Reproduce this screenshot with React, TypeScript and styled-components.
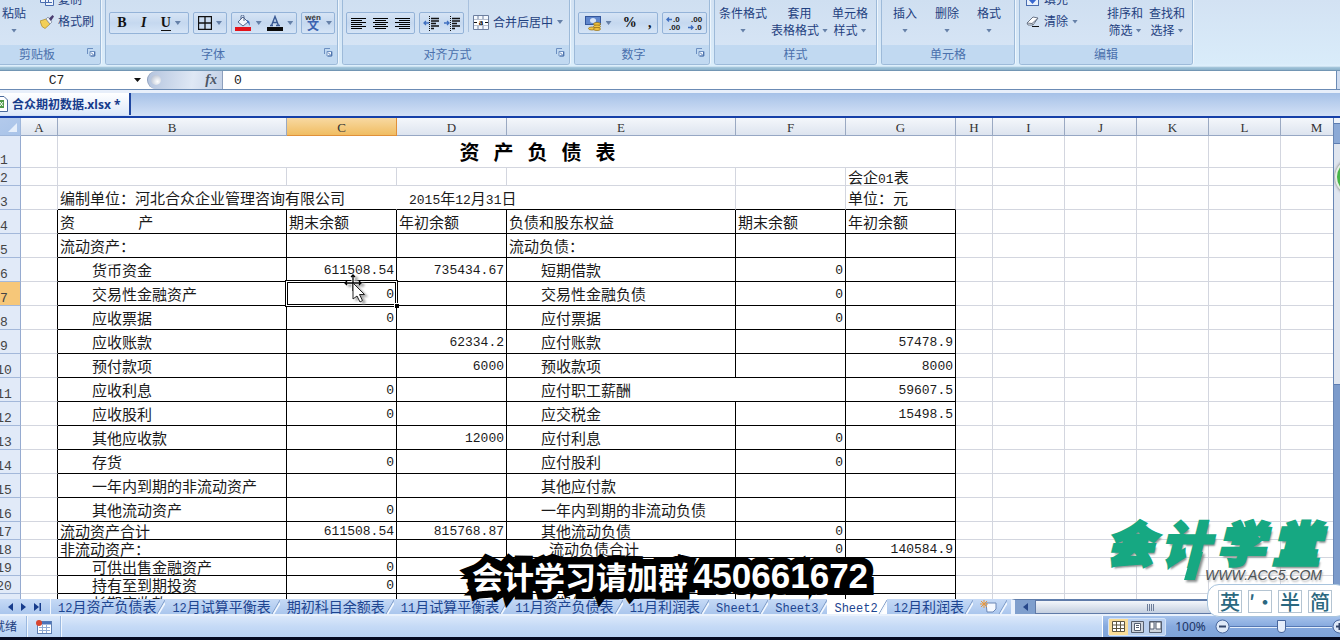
import React from "react";
import styled, { createGlobalStyle, css } from "styled-components";

const UI = `"Noto Sans", "Noto Sans CJK SC", sans-serif`;
const CELL = `"Noto Sans CJK SC", sans-serif`;
const MONO = `"Liberation Mono", "Noto Sans CJK SC", monospace`;

const Global = createGlobalStyle`
  *, *::before, *::after { box-sizing: border-box; }
  html, body { margin: 0; height: 100%; overflow: hidden; }
  button { border: 0; padding: 0; margin: 0; background: none; color: inherit; font: inherit; }
  input { font: inherit; }
`;

const Window = styled.div`
  position: relative;
  display: flex;
  flex-direction: column;
  height: 100vh;
  overflow: hidden;
  background: #fff;
  font: 12px/17px ${UI};
  color: #1f4080;
`;

/* ---------- ribbon ---------- */
const Ribbon = styled.div`
  display: flex;
  flex: none;
  gap: 4px;
  height: 71px;
  margin-left: -10px;
  padding-bottom: 6px;
  background: linear-gradient(#d3e2f3 0, #d9ecfa 64px, #dff0fc 66px, #8fb6cf 68px, #9dc3d8 69px, #6487a8 71px);
`;
const Group = styled.section<{ $w: number }>`
  display: flex;
  flex-direction: column;
  flex: none;
  width: ${(p) => p.$w}px;
  border: 1px solid #9dbad9;
  border-top: 0;
  border-radius: 0 0 3px 3px;
  background: linear-gradient(#cfdff1, #d8e6f6);
  box-shadow: 1px 0 0 #eef6fd;
  overflow: hidden;
`;
const GroupBody = styled.div<{ $gap?: number; $pad?: string }>`
  display: flex;
  align-items: flex-start;
  height: 45px;
  gap: ${(p) => p.$gap ?? 4}px;
  padding: ${(p) => p.$pad ?? "12px 3px 0"};
`;
const GroupLabel = styled.div<{ $launch?: boolean }>`
  display: flex;
  align-items: center;
  justify-content: center;
  height: 19px;
  padding: 0 ${(p) => (p.$launch ? 17 : 0)}px 0 0;
  background: #c1d9f1;
  color: #4a70ac;
  position: relative;
`;
const Launcher = styled.button`
  position: absolute;
  right: 4px;
  top: 3px;
  width: 9px;
  height: 9px;
  display: flex;
`;
const BtnSet = styled.div<{ $w: number }>`
  display: flex;
  align-items: center;
  justify-content: space-around;
  flex: none;
  width: ${(p) => p.$w}px;
  height: 22px;
  border: 1px solid #94b3d8;
  border-radius: 2px;
  background: linear-gradient(#d6e4f5, #c5d8ef 50%, #d5e4f6);
`;
const IconBtn = styled.button`
  display: flex;
  align-items: center;
  justify-content: center;
  height: 20px;
  gap: 4px;
`;
const Glyph = styled.span<{ $i?: boolean; $u?: boolean }>`
  font: ${(p) => (p.$i ? "italic" : "normal")} bold 14px/14px "Liberation Serif", serif;
  color: #111;
  ${(p) => p.$u && "border-bottom: 1px solid #111;"}
`;
const Caret = styled.span`
  flex: none;
  width: 6px;
  height: 4px;
  background: #6580a8;
  clip-path: polygon(0 0, 100% 0, 50% 100%);
`;
const TallBtn = styled.button<{ $w?: number }>`
  display: flex;
  flex-direction: column;
  align-items: center;
  flex: none;
  width: ${(p) => (p.$w ? p.$w + "px" : "auto")};
  white-space: nowrap;
  line-height: 17px;
`;
const Line = styled.span`
  display: flex;
  align-items: center;
  justify-content: center;
  gap: 3px;
  height: 17px;
`;
const Stack = styled.div`
  display: flex;
  flex-direction: column;
  flex: none;
  gap: 5px;
  margin-top: -14px;
`;
const RowBtn = styled.button`
  display: flex;
  align-items: center;
  gap: 4px;
  height: 17px;
  white-space: nowrap;
`;
const Divider = styled.span`
  width: 1px;
  height: 32px;
  margin-top: -12px;
  background: #a9c1de;
`;

/* ---------- formula bar ---------- */
const FormulaBar = styled.div`
  display: flex;
  flex: none;
  height: 19px;
  border-bottom: 1px solid #6b8bb5;
  background: #fff;
  color: #111;
`;
const NameInput = styled.input`
  width: 113px;
  border: 0;
  padding: 2px 0 0;
  text-align: center;
  background: none;
  font: 13px/16px ${MONO};
  color: #222;
  outline: 0;
`;
const NameArrow = styled.button`
  display: flex;
  align-items: center;
  justify-content: flex-end;
  width: 28px;
  margin-right: 6px;
`;
const FxPill = styled.div`
  display: flex;
  align-items: center;
  justify-content: space-between;
  width: 76px;
  padding: 0 5px 0 3px;
  border: 1px solid #8d9fbd;
  border-width: 0 1px;
  border-radius: 10px 0 0 10px;
  background: linear-gradient(100deg, #b4c4de, #dfe8f5 60%, #c4d1e6);
`;
const Knob = styled.span`
  width: 10px;
  height: 10px;
  border-radius: 50%;
  background: radial-gradient(circle at 65% 65%, #fff, #a8b4c8);
`;
const Fx = styled.button`
  font: italic bold 14px/16px "Liberation Serif", serif;
  color: #4c5666;
`;
const FormulaInput = styled.input`
  flex: 1;
  min-width: 0;
  border: 0;
  padding: 2px 0 0 11px;
  font: 13px/16px ${MONO};
  color: #222;
  outline: 0;
`;
const Expand = styled.button`
  width: 4px;
  border-left: 1px solid #6b8bb5;
  background: #cfdcf0;
`;

/* ---------- workbook tab ---------- */
const BookBar = styled.div`
  display: flex;
  align-items: flex-end;
  flex: none;
  height: 28px;
  border-top: 3px solid #e8effa;
  border-bottom: 2px solid #1640a8;
  background: linear-gradient(#a6c1e7, #d3e1f6);
`;
const BookTab = styled.button`
  display: flex;
  align-items: center;
  gap: 4px;
  width: 131px;
  height: 22px;
  margin-bottom: 1px;
  border-right: 2px solid #1f46a0;
  background: linear-gradient(#fff, #dde9fa);
  color: #173c8c;
  font-weight: bold;
  white-space: nowrap;
`;

/* ---------- sheet ---------- */
const SheetArea = styled.div`
  display: flex;
  flex: 1;
  min-height: 0;
  overflow: hidden;
`;
const Viewport = styled.div`
  flex: 1;
  min-width: 0;
  overflow: hidden;
`;
const Grid = styled.table`
  table-layout: fixed;
  width: 1365px;
  margin-left: -12px;
  border-collapse: separate;
  border-spacing: 0;
  color: #1a1a1a;
  font: 15px/17px ${CELL};
`;
const ColHead = styled.th<{ $on?: boolean }>`
  height: 18px;
  padding: 2px 0 0;
  border-right: 1px solid #9aa9c2;
  border-bottom: 1px solid #96a7c4;
  background: linear-gradient(#f4f7fb, #dde4ef);
  color: #333;
  font: 13px/14px "Liberation Serif", serif;
  ${(p) =>
    p.$on &&
    css`
      background: linear-gradient(#f8d9a2, #f0bd62);
      border-color: #e0903a;
    `}
`;
const Corner = styled.th`
  padding: 0;
  border-right: 1px solid #9eb6da;
  border-bottom: 1px solid #9eb6da;
  background: linear-gradient(to top left, #a9c4e9, #b5cbec);
  svg { display: block; margin: 2px 3px 0 auto; }
`;
const RowHead = styled.th<{ $on?: boolean }>`
  padding: 0;
  vertical-align: bottom;
  border-right: 1px solid #96abd0;
  border-bottom: 1px solid #a3b8da;
  background: ${(p) => (p.$on ? "#f6c779" : "#e1eaf8")};
  color: #444;
  font: 13px/13px ${MONO};
`;
const Cell = styled.td<{ $r?: string; $b?: string; $pad?: number; $num?: boolean }>`
  position: relative;
  padding: 0 0 0 ${(p) => p.$pad ?? 2}px;
  border-right: 1px solid ${(p) => p.$r ?? "#d3d6df"};
  border-bottom: 1px solid ${(p) => p.$b ?? "#d3d6df"};
  vertical-align: middle;
  white-space: pre;
  overflow: hidden;
  line-height: 16px;
  ${(p) => p.$num && css`padding: 2px 2px 0 0; text-align: right; font: 13px/15px ${MONO};`}
`;
const Ascii = styled.span`
  font-family: ${MONO};
  font-size: 13px;
  line-height: 0;
`;
const Title = styled.div`
  display: flex;
  justify-content: center;
  gap: 14px;
  padding-left: 60px;
  font: bold 20px/24px "Noto Sans CJK SC", sans-serif;
  color: #000;
`;
const Active = styled(Cell)`
  overflow: visible;
  &::before {
    content: "";
    position: absolute;
    inset: -2px;
    border: 1px solid #000;
    box-shadow: inset 0 0 0 1px #fff, inset 0 0 0 2px #000;
  }
  &::after {
    content: "";
    position: absolute;
    right: -4px;
    bottom: -4px;
    width: 6px;
    height: 6px;
    border: 1px solid #fff;
    background: #000;
  }
`;
const VScroll = styled.div`
  flex: none;
  display: flex;
  flex-direction: column;
  width: 7px;
  border-left: 1px solid #6886b5;
  background: #e3e8f1;
`;
const VPart = styled.div<{ $h: number; $c: string }>`
  height: ${(p) => p.$h}px;
  border-bottom: 1px solid #5d7db2;
  background: ${(p) => p.$c};
`;

/* ---------- sheet tabs ---------- */
const TabsBar = styled.div`
  display: flex;
  flex: none;
  height: 17px;
  border-bottom: 2px solid #e9f1fc;
  background: linear-gradient(#c6daf6, #aac6ed);
  color: #1d4590;
  font: 14px/15px ${CELL};
  overflow: hidden;
`;
const Nav = styled.div`
  display: flex;
  align-items: center;
  flex: none;
  gap: 8px;
  width: 51px;
  padding-left: 8px;
  border-right: 1px solid #f2f7fd;
`;
const NavBtn = styled.button`
  display: flex;
`;
const SheetTab = styled.button<{ $on?: boolean }>`
  flex: none;
  display: flex;
  align-items: center;
  height: 15px;
  padding-left: 7px;
  white-space: nowrap;
  background: ${(p) => (p.$on ? "#fff" : "transparent")};
  ${Ascii} { font-size: 12px; }
`;
const HScroll = styled.div`
  display: flex;
  flex: 1;
  margin-left: 4px;
  border-left: 4px solid #eaf2fd;
  border-top: 1px solid #5f7ead;
  background: #7f9fcd;
`;
const HArrow = styled.button`
  width: 20px;
  display: flex;
  align-items: center;
  justify-content: center;
`;
const HThumb = styled.div`
  flex: 1;
  display: flex;
  align-items: center;
  padding-left: 111px;
  border: 1px solid #5f7aa8;
  background: linear-gradient(#f3f6fb, #c4cfe0);
`;

/* ---------- status bar ---------- */
const Status = styled.div`
  display: flex;
  align-items: stretch;
  flex: none;
  height: 24px;
  border-bottom: 3px solid #050a20;
  background: linear-gradient(#dbe8fa, #c5daf6 50%, #b9d2f3);
`;
const StatusItem = styled.div<{ $w: number; $end?: boolean }>`
  display: flex;
  align-items: center;
  justify-content: ${(p) => (p.$end ? "flex-end" : "center")};
  width: ${(p) => p.$w}px;
  padding-right: ${(p) => (p.$end ? 9 : 0)}px;
  border-right: 1px solid #9ab8e0;
  box-shadow: 1px 0 0 #f0f6fd;
  white-space: nowrap;
  overflow: hidden;
`;
const StatusRight = styled.div`
  display: flex;
  align-items: center;
  width: 238px;
  margin-left: auto;
  padding-left: 5px;
  border-left: 1px solid #fff;
  background: linear-gradient(#a6c3ec, #86a9de 50%, #7ea3d9);
`;
const Views = styled.div`
  display: flex;
  flex: none;
  width: 58px;
  height: 18px;
  border: 1px solid #d3e2f7;
  border-radius: 2px;
  background: #b9cfef;
`;
const ViewBtn = styled.button<{ $on?: boolean }>`
  flex: 1;
  display: flex;
  align-items: center;
  justify-content: center;
  background: ${(p) => (p.$on ? "#f9dc98" : "transparent")};
`;
const Percent = styled.button`
  flex: none;
  width: 49px;
  color: #1d3566;
`;
const ZoomBtn = styled.button`
  display: flex;
  flex: none;
`;
const Slider = styled.input`
  appearance: none;
  flex: none;
  width: 102px;
  height: 14px;
  margin: 0;
  background: linear-gradient(#5578b4, #5578b4) 0 6px / 100% 1px no-repeat, linear-gradient(#e4eefb, #e4eefb) 0 7px / 100% 1px no-repeat;
  &::-webkit-slider-thumb {
    appearance: none;
    width: 9px;
    height: 13px;
    background: #e6eefb;
    border: 1px solid #47659c;
    border-radius: 1px 1px 5px 5px;
  }
`;

/* ---------- overlays ---------- */
const Subtitle = styled.div`
  position: absolute;
  left: 0;
  right: 0;
  bottom: 44px;
  display: flex;
  justify-content: center;
  align-items: center;
  gap: 4px;
  height: 40px;
  color: #fff;
  font: bold 31px/40px "Noto Sans CJK SC", sans-serif;
  -webkit-text-stroke: 14px #000;
  paint-order: stroke fill;
  stroke-linejoin: round;
  text-shadow: 3px 3px 0 #000;
  pointer-events: none;
`;
const SubtitleNumber = styled.span`
  font: bold 35px/40px "Liberation Sans", sans-serif;
`;
const Brand = styled.div`
  position: absolute;
  right: 14px;
  bottom: 54px;
  width: 220px;
  height: 66px;
  pointer-events: none;
`;
const BrandName = styled.div`
  display: flex;
  justify-content: space-between;
  padding-right: 6px;
  color: #16a882;
  font: italic 900 48px/42px "Noto Sans CJK SC", sans-serif;
  -webkit-text-stroke: 3px #16a882;
  text-shadow: 2px 3px 2px #8a8f8f;
`;
const BrandStem = styled.svg`
  position: absolute;
  left: 76px;
  top: 32px;
  filter: drop-shadow(2px 2px 1px #8a8f8f);
`;
const BrandUrl = styled.div`
  position: absolute;
  right: 4px;
  top: 47px;
  color: #4d5254;
  font: italic 14px/16px "Liberation Sans", sans-serif;
  text-shadow: 1px 2px 2px #bbb;
`;
const Ime = styled.div`
  position: absolute;
  right: -8px;
  bottom: 23px;
  display: flex;
  gap: 6px;
  height: 33px;
  padding: 5px 15px 0 10px;
  border: 1px solid #a8c4dd;
  border-radius: 12px;
  background: #fff;
`;
const ImeBtn = styled.button`
  width: 24px;
  height: 23px;
  border: 1px solid #b4c4d2;
  color: #2a6880;
  font: 500 20px/20px "Noto Sans CJK SC", sans-serif;
`;
const Ball = styled.div`
  position: absolute;
  left: calc(100% - 5px);
  top: 158px;
  width: 38px;
  height: 38px;
  border: 2px solid #e8efe8;
  border-radius: 50%;
  background: #48b548;
  box-shadow: 0 0 3px #666;
`;
const Pointer = styled.svg`
  position: absolute;
  left: 344px;
  top: 274px;
  pointer-events: none;
  filter: drop-shadow(3px 2px 1px #aaa);
`;

const Launch = () => (
  <Launcher aria-label="更多">
    <svg width="9" height="9" viewBox="0 0 9 9" fill="none" stroke="#6c8fc0">
      <path d="M.5 6V.5H6" />
      <path d="M3 3.500h5v4.500H3z" fill="#f4f9ff" />
      <path d="M4 4.500 7 7.500M7.500 4v4H4" stroke="#4f74ad" />
    </svg>
  </Launcher>
);

const Bars = ({ rows }: { rows: [number, number][] }) => (
  <svg width="15" height="13" viewBox="0 0 15 13">
    {rows.map(([x, w], i) => (
      <rect key={i} x={x} y={i * 2 + 1} width={w} height="1" fill="#000" />
    ))}
  </svg>
);
const Indent = ({ out }: { out?: boolean }) => (
  <svg width="16" height="15" viewBox="0 0 16 15">
    <path d="M8 2.500h8M8 5h8M8 7.500h5M8 10h8M8 12.500h3" stroke="#111" strokeWidth="1.4" />
    <path d="M6.500 0v15" stroke="#111" strokeDasharray="1 1" />
    <path d={out ? "M6 7H1M3 5 1 7l2 2" : "M0 7h5M3 5l2 2-2 2"} stroke="#3f6fc0" strokeWidth="1.3" fill="none" />
  </svg>
);
const Decimals = ({ more }: { more?: boolean }) => (
  <svg width="17" height="15" viewBox="0 0 17 15" fontFamily="Liberation Sans" fontWeight="bold" fontSize="8" fill="#222">
    <text x={more ? 8 : 4} y="6">{more ? ".0" : ".00"}</text>
    <text x={more ? 4 : 8} y="14">{more ? ".00" : ".0"}</text>
    <path d={more ? "M7 3.500H2M4 1.500l-2 2 2 2" : "M1 11.500h5M4 9.500l2 2-2 2"} stroke="#3f6fc0" strokeWidth="1.4" fill="none" />
  </svg>
);

/* Latin letters and digits in a cell use the narrow fixed-width face */
const Mixed = ({ t }: { t: string }) => (
  <>
    {t.split(/([\x21-\x7e]+)/).map((s, i) => (i % 2 ? <Ascii key={i}>{s}</Ascii> : s))}
  </>
);

const cols = [33, 37, 229, 110, 110, 229, 110, 110, 37, 72, 72, 72, 72, 72];
const letters = "ABCDEFGHIJKLM".split("");

type Row = { h?: number; b?: string; flush?: boolean; c?: string; d?: string; e?: string; ePad?: number; f?: string; g?: string; merge?: boolean };
const rows: Row[] = [
  { b: "流动资产：", flush: true, e: "流动负债：", ePad: 2 },
  { b: "货币资金", c: "611508.54", d: "735434.67", e: "短期借款", f: "0" },
  { b: "交易性金融资产", c: "0", e: "交易性金融负债", f: "0" },
  { b: "应收票据", c: "0", e: "应付票据", f: "0" },
  { b: "应收账款", d: "62334.2", e: "应付账款", g: "57478.9" },
  { b: "预付款项", d: "6000", e: "预收款项", g: "8000" },
  { b: "应收利息", c: "0", e: "应付职工薪酬", g: "59607.5", merge: true },
  { b: "应收股利", c: "0", e: "应交税金", g: "15498.5" },
  { b: "其他应收款", d: "12000", e: "应付利息", f: "0" },
  { b: "存货", c: "0", e: "应付股利", f: "0" },
  { b: "一年内到期的非流动资产", e: "其他应付款" },
  { b: "其他流动资产", c: "0", e: "一年内到期的非流动负债" },
  { h: 18, b: "流动资产合计", flush: true, c: "611508.54", d: "815768.87", e: "其他流动负债", f: "0" },
  { h: 18, b: "非流动资产：", flush: true, e: "流动负债合计", ePad: 42, f: "0", g: "140584.9" },
  { h: 18, b: "可供出售金融资产", c: "0" },
  { h: 18, b: "持有至到期投资", c: "0" },
  { h: 18, b: "长期应收款", e: "长期借款" },
];
const K = "#000";

const Rest = () => (
  <>
    {letters.slice(7).map((l) => (
      <Cell key={l} />
    ))}
  </>
);

const Spreadsheet = () => (
  <Grid>
    <colgroup>
      {cols.map((w, i) => (
        <col key={i} width={w} />
      ))}
    </colgroup>
    <thead>
      <tr>
        <Corner>
          <svg width="9" height="10" viewBox="0 0 9 10"><path d="M9 0v9H0z" fill="#e6effb" /></svg>
        </Corner>
        {letters.map((l) => (
          <ColHead key={l} $on={l === "C"}>{l}</ColHead>
        ))}
      </tr>
    </thead>
    <tbody>
      <tr style={{ height: 32 }}>
        <RowHead>1</RowHead>
        <Cell />
        <Cell colSpan={6}>
          <Title>{"资产负债表".split("").map((c) => <span key={c}>{c}</span>)}</Title>
        </Cell>
        <Rest />
      </tr>
      <tr style={{ height: 18 }}>
        <RowHead>2</RowHead>
        <Cell /><Cell /><Cell /><Cell /><Cell /><Cell />
        <Cell><Mixed t="会企01表" /></Cell>
        <Rest />
      </tr>
      <tr style={{ height: 24 }}>
        <RowHead>3</RowHead>
        <Cell />
        <Cell $r="transparent" $b={K} colSpan={2}>编制单位：河北合众企业管理咨询有限公司</Cell>
        <Cell $b={K} $pad={12} colSpan={2}><Mixed t="2015年12月31日" /></Cell>
        <Cell $b={K} />
        <Cell $b={K}>单位：元</Cell>
        <Rest />
      </tr>
      <tr style={{ height: 24 }}>
        <RowHead>4</RowHead>
        <Cell $r={K} />
        {["资\u3000\u3000\u3000\u3000\u00a0产", "期末余额", "年初余额", "负债和股东权益", "期末余额", "年初余额"].map((t, i) => (
          <Cell key={i} $r={K} $b={K}>{t}</Cell>
        ))}
        <Rest />
      </tr>
      {rows.map((r, i) => {
        const Num = i === 2 ? Active : Cell;
        return (
          <tr key={i} style={{ height: r.h ?? 24 }}>
            <RowHead $on={i === 2}>{i + 5}</RowHead>
            <Cell $r={K} />
            <Cell $r={K} $b={K} $pad={r.flush ? 2 : 34}>{r.b}</Cell>
            <Num $r={K} $b={K} $num>{r.c}</Num>
            <Cell $r={K} $b={K} $num>{r.d}</Cell>
            <Cell $r={K} $b={K} $pad={r.ePad ?? 34} colSpan={r.merge ? 2 : 1}>{r.e}</Cell>
            {!r.merge && <Cell $r={K} $b={K} $num>{r.f}</Cell>}
            <Cell $r={K} $b={K} $num>{r.g}</Cell>
            <Rest />
          </tr>
        );
      })}
    </tbody>
  </Grid>
);

const Tall = ({ a, b, w }: { a: string; b?: string; w?: number }) => (
  <TallBtn $w={w}>
    <Line>{a}</Line>
    <Line>{b}<Caret /></Line>
  </TallBtn>
);

const sheets = ["12月资产负债表", "12月试算平衡表", "期初科目余额表", "11月试算平衡表", "11月资产负债表", "11月利润表", "Sheet1", "Sheet3", "Sheet2", "12月利润表"];

const Slant = () => (
  <svg width="9" height="15" viewBox="0 0 9 15" fill="none">
    <path d="M1 15 9 1" stroke="#7f9cc9" />
    <path d="M2.500 15 9 4" stroke="#f4f9ff" strokeWidth="1.5" />
  </svg>
);

export default function App() {
  return (
    <Window>
      <Global />
      <Ribbon>
        <Group $w={111}>
          <GroupBody $gap={14} $pad="5px 1px 0 11px">
            <Tall a="粘贴" />
            <Stack>
              <RowBtn>
                <svg width="14" height="13" viewBox="0 0 14 13" fill="#eef4fc" stroke="#4a6db0"><path d="M.5.5h8v9h-8zM5.500 3.500h8v9h-8z" /><path d="M7 6.500h5M7 9.500h5" /></svg>
                复制
              </RowBtn>
              <RowBtn>
                <svg width="14" height="14" viewBox="0 0 14 14"><path d="M0 6 6 4l4 5-5 4.500-3-2z" fill="#f2cf58" stroke="#a98725" strokeWidth=".7" /><path d="m6 4 2-2 4 5-2 2z" fill="#eef2f8" stroke="#7a869c" strokeWidth=".7" /><path d="m9 3.500 3.500-3.500L14 1.500 11 6z" fill="#4a3d70" /></svg>
                格式刷
              </RowBtn>
            </Stack>
          </GroupBody>
          <GroupLabel $launch>剪贴板<Launch /></GroupLabel>
        </Group>

        <Group $w={233}>
          <GroupBody>
            <BtnSet $w={80}>
              <IconBtn aria-label="加粗"><Glyph>B</Glyph></IconBtn>
              <IconBtn aria-label="倾斜"><Glyph $i>I</Glyph></IconBtn>
              <IconBtn aria-label="下划线"><Glyph $u>U</Glyph><Caret /></IconBtn>
            </BtnSet>
            <BtnSet $w={34}>
              <IconBtn aria-label="边框">
                <svg width="14" height="14" viewBox="0 0 14 14" fill="none" stroke="#111"><path d="M.5.5h13v13H.5zM7 0v14M0 7h14" strokeWidth="1.3" /></svg>
                <Caret />
              </IconBtn>
            </BtnSet>
            <BtnSet $w={66}>
              <IconBtn aria-label="填充颜色">
                <svg width="17" height="16" viewBox="0 0 17 16"><path d="m3 7 5-5 5 5-5 4z" fill="#f4f7fb" stroke="#52668c" /><path d="M6 4V1.500a1.500 1.500 0 0 1 3 0V6" fill="none" stroke="#52668c" /><path d="M12 5c3 1 3 3 2.500 6-1-3-1-3-2.500-4z" fill="#3968b8" /><rect y="12" width="16" height="4" fill="#e3131b" /></svg>
                <Caret />
              </IconBtn>
              <IconBtn aria-label="字体颜色">
                <svg width="16" height="16" viewBox="0 0 16 16"><path d="M3 10.500h3M9 10.500h4M4.500 10.500 8 1.500l3.500 9M6 7.500h4" fill="none" stroke="#3a5a94" strokeWidth="1.4" /><rect y="12" width="16" height="4" fill="#0a0a0a" /></svg>
                <Caret />
              </IconBtn>
            </BtnSet>
            <BtnSet $w={34}>
              <IconBtn aria-label="拼音指南">
                <svg width="18" height="18" viewBox="0 0 18 18" textAnchor="middle"><text x="9" y="6" fontSize="8" fontWeight="bold" fontFamily="Liberation Sans" fill="#333">wén</text><text x="9" y="16" fontSize="12" fontFamily="Noto Sans CJK SC" fontWeight="bold" fill="#3a62b0">文</text></svg>
                <Caret />
              </IconBtn>
            </BtnSet>
          </GroupBody>
          <GroupLabel $launch>字体<Launch /></GroupLabel>
        </Group>

        <Group $w={228}>
          <GroupBody>
            <BtnSet $w={69}>
              <IconBtn aria-label="左对齐"><Bars rows={[[0, 15], [0, 11], [0, 15], [0, 11], [0, 15], [0, 11]]} /></IconBtn>
              <IconBtn aria-label="居中"><Bars rows={[[0, 15], [2, 11], [0, 15], [2, 11], [0, 15], [2, 11]]} /></IconBtn>
              <IconBtn aria-label="右对齐"><Bars rows={[[0, 15], [4, 11], [0, 15], [4, 11], [0, 15], [4, 11]]} /></IconBtn>
            </BtnSet>
            <BtnSet $w={45}>
              <IconBtn aria-label="减少缩进"><Indent out /></IconBtn>
              <IconBtn aria-label="增加缩进"><Indent /></IconBtn>
            </BtnSet>
            <Divider />
            <IconBtn>
              <svg width="16" height="15" viewBox="0 0 16 15"><path d="M.5.5h15v14H.5zM0 4.500h16M0 10.500h16M5 0v4M10 0v4M5 11v4M10 11v4" fill="#f4f8fd" stroke="#6c7f9f" /><rect x="1" y="4.500" width="14" height="6" fill="#fff" /><text x="8" y="10" fontSize="9" fontWeight="bold" textAnchor="middle" fontFamily="Liberation Serif" fill="#111">a</text><path d="M1 7.500h3M12 7.500h3" stroke="#111" /></svg>
              合并后居中
              <Caret />
            </IconBtn>
          </GroupBody>
          <GroupLabel $launch>对齐方式<Launch /></GroupLabel>
        </Group>

        <Group $w={136}>
          <GroupBody>
            <BtnSet $w={80}>
              <IconBtn aria-label="会计数字格式">
                <svg width="17" height="16" viewBox="0 0 17 16"><rect x=".5" y="1.500" width="15" height="8" fill="#5f86cc" stroke="#33569b" /><ellipse cx="8" cy="5.500" rx="3" ry="2.500" fill="#d5e3f8" /><g fill="#f4c542" stroke="#8d6a18" strokeWidth=".7"><ellipse cx="12" cy="9" rx="3.500" ry="1.500" /><ellipse cx="12" cy="11.500" rx="3.500" ry="1.500" /><ellipse cx="7" cy="13.500" rx="3.500" ry="1.500" /><ellipse cx="12" cy="14" rx="3.500" ry="1.500" /></g></svg>
                <Caret />
              </IconBtn>
              <IconBtn aria-label="百分比"><Glyph>%</Glyph></IconBtn>
              <IconBtn aria-label="千位分隔"><Glyph>,</Glyph></IconBtn>
            </BtnSet>
            <BtnSet $w={45}>
              <IconBtn aria-label="增加小数位"><Decimals more /></IconBtn>
              <IconBtn aria-label="减少小数位"><Decimals /></IconBtn>
            </BtnSet>
          </GroupBody>
          <GroupLabel $launch>数字<Launch /></GroupLabel>
        </Group>

        <Group $w={163}>
          <GroupBody $pad="5px 4px 0">
            <Tall a="条件格式" w={48} />
            <Tall a="套用" b="表格格式" />
            <Tall a="单元格" b="样式" />
          </GroupBody>
          <GroupLabel>样式</GroupLabel>
        </Group>

        <Group $w={134}>
          <GroupBody $gap={18} $pad="5px 11px 0">
            <Tall a="插入" w={24} />
            <Tall a="删除" w={24} />
            <Tall a="格式" w={24} />
          </GroupBody>
          <GroupLabel>单元格</GroupLabel>
        </Group>

        <Group $w={174}>
          <GroupBody $gap={6} $pad="5px 6px 0">
            <Stack>
              <RowBtn>
                <svg width="14" height="13" viewBox="0 0 14 13"><rect x=".5" y=".5" width="12" height="12" fill="#e8f0fb" stroke="#4a6db0" /><path d="M5 2h3v4h3l-4.500 5L2 6h3z" fill="#3968d0" /></svg>
                填充
              </RowBtn>
              <RowBtn>
                <svg width="14" height="13" viewBox="0 0 14 13"><path d="m1 8 6-6 5 1-5 7H2z" fill="#fff" stroke="#6b7688" /><path d="m1 8 5 .5L7 10M6 8.500 12 3" fill="none" stroke="#6b7688" /><path d="M6 11.500h7" stroke="#111" /></svg>
                清除 <Caret />
              </RowBtn>
            </Stack>
            <TallBtn $w={17} aria-hidden />
            <Tall a="排序和" b="筛选" />
            <Tall a="查找和" b="选择" />
          </GroupBody>
          <GroupLabel>编辑</GroupLabel>
        </Group>
      </Ribbon>

      <FormulaBar>
        <NameInput aria-label="名称框" defaultValue="C7" />
        <NameArrow aria-label="展开名称">
          <svg width="7" height="4" viewBox="0 0 7 4"><path d="M0 0h7L3.500 4z" fill="#111" /></svg>
        </NameArrow>
        <FxPill><Knob /><Fx aria-label="插入函数">fx</Fx></FxPill>
        <FormulaInput aria-label="编辑栏" defaultValue="0" />
        <Expand aria-label="展开编辑栏" />
      </FormulaBar>

      <BookBar>
        <BookTab>
          <svg width="8" height="16" viewBox="0 0 8 16"><path d="M0 .5h4L7.500 4v11.500H0" fill="#fff" stroke="#4a6a9c" /><path d="M0 4h4v8H0z" fill="#4f9a4a" /><path d="m0 6 3 4M3 6l-3 4" stroke="#fff" /></svg>
          合众期初数据.xlsx *
        </BookTab>
      </BookBar>

      <SheetArea>
        <Viewport><Spreadsheet /></Viewport>
        <VScroll>
          <VPart $h={6} $c="#eef3fa" />
          <VPart $h={20} $c="#8ba9d6" />
          <VPart $h={241} $c="#dfe5ef" />
          <VPart $h={214} $c="#7c9bcb" />
        </VScroll>
      </SheetArea>

      <TabsBar>
        <Nav>
          <NavBtn aria-label="上一个"><svg width="5" height="8" viewBox="0 0 5 8"><path d="M5 0v8L0 4z" fill="#173c8c" /></svg></NavBtn>
          <NavBtn aria-label="下一个"><svg width="5" height="8" viewBox="0 0 5 8"><path d="M0 0v8l5-4z" fill="#173c8c" /></svg></NavBtn>
          <NavBtn aria-label="最后"><svg width="7" height="8" viewBox="0 0 7 8"><path d="M0 0v8l5-4zM5.500 0H7v8H5.500z" fill="#173c8c" /></svg></NavBtn>
        </Nav>
        {sheets.map((s) => (
          <SheetTab key={s} $on={s === "Sheet2"}><span><Mixed t={s} /></span><Slant /></SheetTab>
        ))}
        <SheetTab aria-label="插入工作表">
          <svg width="18" height="13" viewBox="0 0 18 13"><path d="M6 3h10v6l-3 3H7z" fill="#f5f9ff" stroke="#6b86b5" /><path d="M4 0v8M0 4h8M1 1l6 6M7 1 1 7" stroke="#e8973a" /></svg>
          <Slant />
        </SheetTab>
        <HScroll>
          <HArrow aria-label="向左滚动"><svg width="5" height="8" viewBox="0 0 5 8"><path d="M5 0v8L0 4z" fill="#27488a" /></svg></HArrow>
          <HThumb><svg width="8" height="7" viewBox="0 0 8 7"><path d="M.5 0v7M2.500 0v7M4.500 0v7M6.500 0v7" stroke="#6c7c99" /></svg></HThumb>
        </HScroll>
      </TabsBar>

      <Status>
        <StatusItem $w={27} $end>就绪</StatusItem>
        <StatusItem $w={34}>
          <svg width="16" height="14" viewBox="0 0 16 14"><rect x="1.500" y="1.500" width="14" height="12" fill="#fff" stroke="#5f7fb3" /><path d="M2 3h13" stroke="#4a72b8" strokeWidth="3" /><path d="M3 7.500h11M3 10.500h11M6.500 5v8M10.500 5v8" stroke="#8fa9d2" /><circle cx="3" cy="3" r="3" fill="#d8452f" /></svg>
        </StatusItem>
        <StatusRight>
          <Views>
            <ViewBtn $on aria-label="普通"><svg width="13" height="11" viewBox="0 0 13 11"><path d="M.5.5h12v10H.5zM0 4h13M0 7.500h13M4.500 0v11M8.500 0v11" fill="#fff" stroke="#5d5540" /></svg></ViewBtn>
            <ViewBtn aria-label="页面布局"><svg width="13" height="12" viewBox="0 0 13 12"><path d="M.5.5h12v11H.5z" fill="#cdd3dc" stroke="#555f70" /><path d="M3.500 2.500h6v7h-6z" fill="#fff" stroke="#555f70" /><path d="M5 4.500h3M5 6.500h3" stroke="#555f70" /></svg></ViewBtn>
            <ViewBtn aria-label="分页预览"><svg width="13" height="12" viewBox="0 0 13 12"><path d="M.5.5h12v11H.5z" fill="#cdd3dc" stroke="#555f70" /><path d="M1 1h4v7H1zM7 1h5v7H7z" fill="#fff" stroke="#555f70" /></svg></ViewBtn>
          </Views>
          <Percent>100%</Percent>
          <ZoomBtn aria-label="缩小"><svg width="15" height="15" viewBox="0 0 15 15"><circle cx="7.500" cy="7.500" r="6.500" fill="#dfe9f8" stroke="#4a689e" /><path d="M4 7.500h7" stroke="#33456a" strokeWidth="2" /></svg></ZoomBtn>
          <Slider type="range" aria-label="显示比例" defaultValue={50} />
          <ZoomBtn aria-label="放大"><svg width="15" height="15" viewBox="0 0 15 15"><circle cx="7.500" cy="7.500" r="6.500" fill="#dfe9f8" stroke="#4a689e" /><path d="M4 7.500h7M7.500 4v7" stroke="#33456a" strokeWidth="2" /></svg></ZoomBtn>
        </StatusRight>
      </Status>

      <Pointer width="24" height="32" viewBox="0 0 24 32">
        <path d="M9 1v16M1 9h16" stroke="#fff" strokeWidth="3" />
        <path d="M9 1v16M1 9h16M7 3l2-2 2 2M3 7 1 9l2 2M15 7l2 2-2 2" fill="none" stroke="#000" strokeWidth="1.3" />
        <path d="M9 9v16l4-3 3 6 2.500-1.500-3-6h5z" fill="#fff" stroke="#222" />
      </Pointer>
      <Subtitle>
        <span>会计学习请加群</span>
        <SubtitleNumber>450661672</SubtitleNumber>
      </Subtitle>
      <Brand>
        <BrandName>{"会计学堂".split("").map((c) => <span key={c}>{c}</span>)}</BrandName>
        <BrandStem width="22" height="28" viewBox="0 0 22 28"><path d="M10 0h11l-8 28H2z" fill="#16a882" /></BrandStem>
        <BrandUrl>WWW.ACC5.COM</BrandUrl>
      </Brand>
      <Ime>
        {["英", "′·", "半", "简"].map((t) => <ImeBtn key={t}>{t}</ImeBtn>)}
      </Ime>
      <Ball />
    </Window>
  );
}
